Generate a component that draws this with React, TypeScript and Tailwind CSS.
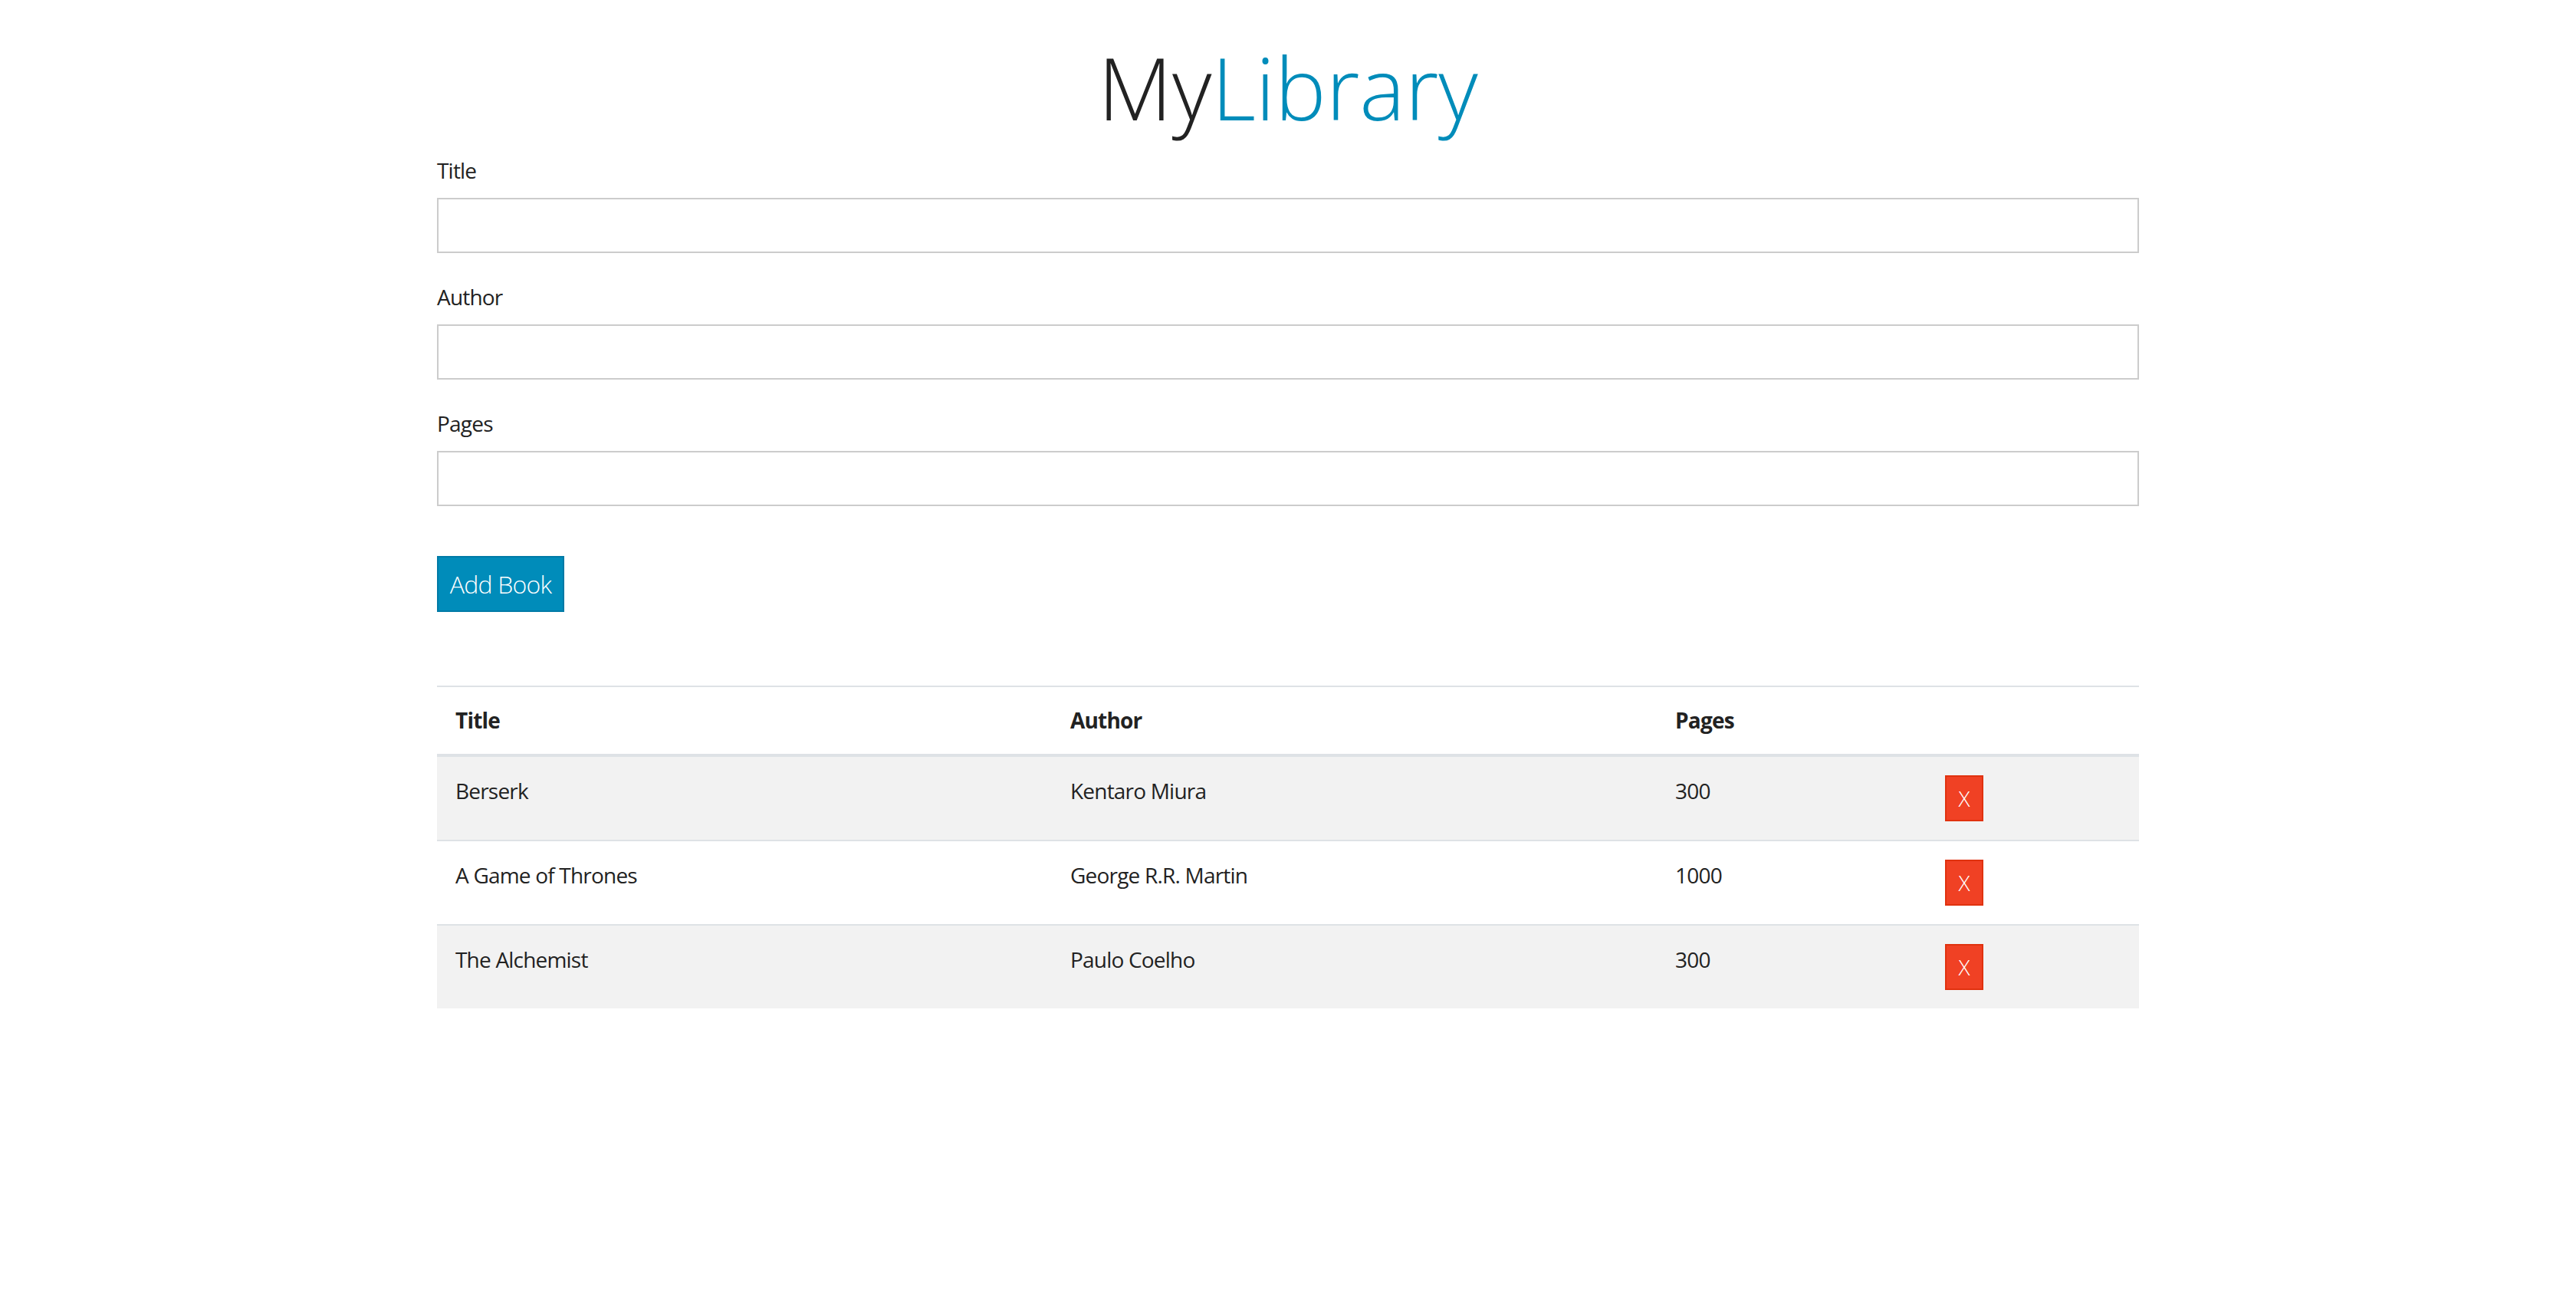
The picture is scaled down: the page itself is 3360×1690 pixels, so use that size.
import React from "react";

const books = [
  { title: "Berserk", author: "Kentaro Miura", pages: "300" },
  { title: "A Game of Thrones", author: "George R.R. Martin", pages: "1000" },
  { title: "The Alchemist", author: "Paulo Coelho", pages: "300" },
];

function Field({ label, first }: { label: string; first?: boolean }) {
  return (
    <div className={first ? "" : "mt-[36px]"}>
      <label className="block text-[28px] leading-[42px] tracking-[-0.8px] text-[#222]">{label}</label>
      <input
        type="text"
        className="mt-[15px] block w-full h-[72px] border-2 border-[#cccccc] bg-white outline-none px-4 text-[28px]"
      />
    </div>
  );
}

export default function App() {
  return (
    <div className="min-h-screen bg-white text-[#222]" style={{ fontFamily: '"Open Sans", "Liberation Sans", sans-serif' }}>
      <div className="w-[2220px] mx-auto">
        <h1 className="pt-[42px] text-center text-[112px] leading-[144px] font-light">
          <span className="text-[#222]">My</span>
          <span className="text-[#008cba]">Library</span>
        </h1>
        <div className="mt-[15px]">
          <Field label="Title" first />
          <Field label="Author" />
          <Field label="Pages" />
        </div>
        <button className="mt-[65px] w-[166px] h-[73px] flex items-center justify-center bg-[#008cba] border-2 border-[#007aa6] text-white text-[32px] font-light tracking-[-0.8px]">
          Add Book
        </button>
        <table className="mt-[96px] w-full border-collapse text-[28px] tracking-[-0.8px] text-[#222]">
          <colgroup>
            <col className="w-[802px]" />
            <col className="w-[789px]" />
            <col className="w-[352px]" />
            <col />
          </colgroup>
          <thead>
            <tr className="border-t-2 border-b-4 border-[#dee2e6]">
              <th className="text-left font-bold px-[24px] py-[24px] leading-[39px]">Title</th>
              <th className="text-left font-bold px-[24px] py-[24px] leading-[39px]">Author</th>
              <th className="text-left font-bold px-[24px] py-[24px] leading-[39px]">Pages</th>
              <th className="px-[24px] py-[24px]"></th>
            </tr>
          </thead>
          <tbody>
            {books.map((b, i) => (
              <tr
                key={i}
                className={(i % 2 === 0 ? "bg-[#f2f2f2]" : "bg-white") + (i < books.length - 1 ? " border-b-2 border-[#dee2e6]" : "")}
              >
                <td className="align-top px-[24px] pt-[24px] pb-[24px] leading-[41px]">{b.title}</td>
                <td className="align-top px-[24px] pt-[24px] pb-[24px] leading-[41px]">{b.author}</td>
                <td className="align-top px-[24px] pt-[24px] pb-[24px] leading-[41px]">{b.pages}</td>
                <td className="align-top px-[24px] pt-[24px] pb-[24px]">
                  <button className="w-[50px] h-[60px] flex items-center justify-center bg-[#f04124] border-2 border-[#e0320f] text-white text-[28px] font-light tracking-normal">
                    X
                  </button>
                </td>
              </tr>
            ))}
          </tbody>
        </table>
      </div>
    </div>
  );
}
